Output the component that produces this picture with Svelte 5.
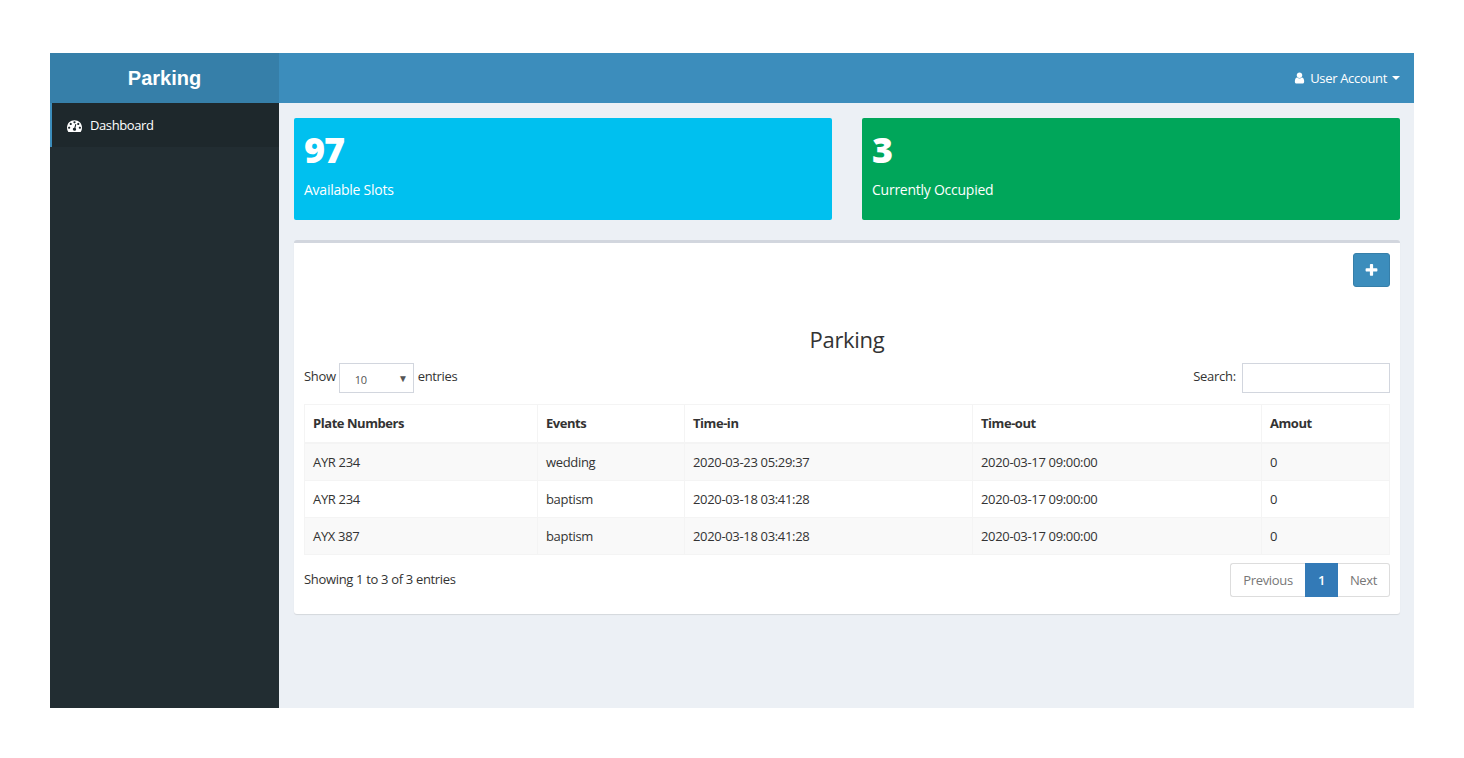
<script lang="ts">
  const rows = [
    { plate: 'AYR 234', event: 'wedding', timeIn: '2020-03-23 05:29:37', timeOut: '2020-03-17 09:00:00', amount: 0 },
    { plate: 'AYR 234', event: 'baptism', timeIn: '2020-03-18 03:41:28', timeOut: '2020-03-17 09:00:00', amount: 0 },
    { plate: 'AYX 387', event: 'baptism', timeIn: '2020-03-18 03:41:28', timeOut: '2020-03-17 09:00:00', amount: 0 }
  ];
</script>

<div class="page">
  <div class="wrapper">
    <header class="topbar">
      <div class="logo">Parking</div>
      <div class="navbar">
        <span class="account">
          <svg class="icon user" viewBox="0 0 1792 1792"><path d="M1536 1399q0 109-62.5 187t-150.5 78h-854q-88 0-150.5-78t-62.5-187q0-85 8.5-160.5t31.5-152 58.5-131 94-89 134.5-34.5q131 128 313 128t313-128q76 0 134.5 34.5t94 89 58.5 131 31.5 152 8.5 160.5zm-256-887q0 159-112.5 271.5t-271.5 112.5-271.5-112.5-112.5-271.5 112.5-271.5 271.5-112.5 271.5 112.5 112.5 271.5z"/></svg>
          User Account
          <span class="caret"></span>
        </span>
      </div>
    </header>
    <div class="body">
      <aside class="sidebar">
        <div class="nav-item">
          <svg class="icon dash" viewBox="0 0 1792 1792"><path d="M384 1152q0-53-37.5-90.5t-90.5-37.5-90.5 37.5-37.5 90.5 37.5 90.5 90.5 37.5 90.5-37.5 37.5-90.5zm192-448q0-53-37.5-90.5t-90.5-37.5-90.5 37.5-37.5 90.5 37.5 90.5 90.5 37.5 90.5-37.5 37.5-90.5zm428 481l101-382q6-26-7.5-48.5t-38.5-29.5-48 6.5-30 39.5l-101 382q-60 5-107 43.5t-63 98.5q-20 77 20 146t117 89 146-20 89-117q16-60-6-117t-72-91zm660-33q0-53-37.5-90.5t-90.5-37.5-90.5 37.5-37.5 90.5 37.5 90.5 90.5 37.5 90.5-37.5 37.5-90.5zm-640-640q0-53-37.5-90.5t-90.5-37.5-90.5 37.5-37.5 90.5 37.5 90.5 90.5 37.5 90.5-37.5 37.5-90.5zm448 192q0-53-37.5-90.5t-90.5-37.5-90.5 37.5-37.5 90.5 37.5 90.5 90.5 37.5 90.5-37.5 37.5-90.5zm320 448q0 261-141 483-19 29-54 29h-1402q-35 0-54-29-141-221-141-483 0-182 71-348t191-286 286-191 348-71 348 71 286 191 191 286 71 348z"/></svg>
          <span>Dashboard</span>
        </div>
      </aside>
      <main class="content">
        <div class="stats">
          <div class="stat aqua">
            <h3>97</h3>
            <p>Available Slots</p>
          </div>
          <div class="stat green">
            <h3>3</h3>
            <p>Currently Occupied</p>
          </div>
        </div>
        <section class="box">
          <div class="actions">
            <button class="add" aria-label="Add">
              <svg class="icon plus" viewBox="0 0 1792 1792"><path d="M1600 736v192q0 40-28 68t-68 28h-416v416q0 40-28 68t-68 28h-192q-40 0-68-28t-28-68v-416h-416q-40 0-68-28t-28-68v-192q0-40 28-68t68-28h416v-416q0-40 28-68t68-28h192q40 0 68 28t28 68v416h416q40 0 68 28t28 68z"/></svg>
            </button>
          </div>
          <h2>Parking</h2>
          <div class="controls">
            <div class="length">
              <span class="lbl">Show</span>
              <span class="select"><span>10</span><i>▼</i></span>
              <span class="lbl">entries</span>
            </div>
            <div class="search">
              <span class="lbl">Search:</span>
              <input type="search" />
            </div>
          </div>
          <table>
            <thead>
              <tr>
                <th class="c1">Plate Numbers</th>
                <th class="c2">Events</th>
                <th class="c3">Time-in</th>
                <th class="c4">Time-out</th>
                <th>Amout</th>
              </tr>
            </thead>
            <tbody>
              {#each rows as row}
                <tr>
                  <td>{row.plate}</td>
                  <td>{row.event}</td>
                  <td>{row.timeIn}</td>
                  <td>{row.timeOut}</td>
                  <td>{row.amount}</td>
                </tr>
              {/each}
            </tbody>
          </table>
          <div class="footer">
            <div class="info">Showing 1 to 3 of 3 entries</div>
            <div class="pager">
              <span class="prev">Previous</span>
              <span class="current">1</span>
              <span class="next">Next</span>
            </div>
          </div>
        </section>
      </main>
    </div>
  </div>
</div>

<style>
  :global(body) {
    background: #fff;
  }

  .page {
    padding: 53px 50px 50px;
    font-family: "Open Sans", "Noto Sans", sans-serif;
    font-size: 13px;
    letter-spacing: -0.33px;
    color: #333;
  }

  .wrapper {
    height: 655px;
    display: flex;
    flex-direction: column;
    background: #ecf0f5;
  }

  .topbar {
    display: flex;
    height: 50px;
    flex-shrink: 0;
  }

  .logo {
    width: 229px;
    background: #367fa9;
    color: #fff;
    font-family: "Liberation Sans", Arial, sans-serif;
    font-size: 20px;
    font-weight: 700;
    letter-spacing: 0;
    line-height: 50px;
    text-align: center;
  }

  .navbar {
    flex: 1;
    background: #3c8dbc;
    display: flex;
    align-items: center;
    justify-content: flex-end;
    padding-right: 14px;
  }

  .account {
    color: #fff;
    display: flex;
    align-items: center;
    gap: 4px;
  }

  .icon {
    width: 14px;
    height: 14px;
    fill: #fff;
  }

  .user {
    width: 13px;
    height: 14px;
  }

  .caret {
    width: 0;
    height: 0;
    margin-left: 1px;
    border-top: 4px solid #fff;
    border-left: 4px solid transparent;
    border-right: 4px solid transparent;
  }

  .body {
    flex: 1;
    display: flex;
    min-height: 0;
  }

  .sidebar {
    width: 229px;
    background: #222d32;
  }

  .nav-item {
    height: 44px;
    background: #1e282c;
    border-left: 2px solid #3c8dbc;
    padding-left: 15px;
    color: #fff;
    display: flex;
    align-items: center;
    gap: 8px;
    letter-spacing: -0.4px;
  }

  .dash {
    width: 15px;
    height: 15px;
  }

  .content {
    flex: 1;
    padding: 15px 14px 0 15px;
  }

  .stats {
    display: grid;
    grid-template-columns: 1fr 1fr;
    gap: 30px;
    margin-bottom: 20px;
  }

  .stat {
    height: 102px;
    box-sizing: border-box;
    padding: 10px;
    border-radius: 2px;
    color: #fff;
  }

  .aqua {
    background: #00c0ef;
  }

  .green {
    background: #00a65a;
  }

  .stat h3 {
    margin: 0 0 8px;
    font-size: 36px;
    font-weight: 800;
    line-height: 44px;
    letter-spacing: -1px;
  }

  .stat p {
    margin: 0;
    font-size: 14px;
    line-height: 20px;
    letter-spacing: -0.25px;
  }

  .box {
    background: #fff;
    border-top: 3px solid #d2d6de;
    border-radius: 3px;
    box-shadow: 0 1px 1px rgba(0, 0, 0, 0.1);
    padding: 10px;
    height: 374px;
    box-sizing: border-box;
  }

  .actions {
    display: flex;
    justify-content: flex-end;
    height: 34px;
  }

  .add {
    width: 37px;
    height: 34px;
    padding: 0;
    background: #3c8dbc;
    border: 1px solid #367fa9;
    border-radius: 3px;
    display: flex;
    align-items: center;
    justify-content: center;
  }

  .plus {
    width: 15px;
    height: 15px;
  }

  h2 {
    margin: 37px 0 0;
    font-size: 22px;
    font-weight: 400;
    line-height: 30px;
    text-align: center;
    letter-spacing: -0.3px;
  }

  .controls {
    display: flex;
    justify-content: space-between;
    align-items: center;
    height: 30px;
    margin-top: 9px;
  }

  .length,
  .search {
    display: flex;
    align-items: flex-start;
    gap: 3px;
  }

  .length .select + .lbl {
    margin-left: 1px;
  }

  .lbl {
    line-height: 27px;
  }

  .select {
    width: 75px;
    height: 30px;
    box-sizing: border-box;
    border: 1px solid #d2d6de;
    display: flex;
    align-items: center;
    justify-content: space-between;
    padding: 2px 5px 0 15px;
    font-size: 11px;
    color: #555;
  }

  .select i {
    font-style: normal;
    font-size: 10px;
    margin-top: -3px;
  }

  .search {
    gap: 6px;
    letter-spacing: -0.25px;
  }

  input {
    width: 148px;
    height: 30px;
    box-sizing: border-box;
    border: 1px solid #d2d6de;
    padding: 0 8px;
    outline: none;
  }

  table {
    width: 1086px;
    margin-top: 11px;
    table-layout: fixed;
    border-collapse: collapse;
    border: 1px solid #f4f4f4;
  }

  th,
  td {
    padding: 8px;
    border: 1px solid #f4f4f4;
    line-height: 20px;
    text-align: left;
    font-weight: 400;
  }

  th {
    font-weight: 700;
    height: 38px;
    padding-top: 0;
    padding-bottom: 0;
    border-bottom-width: 2px;
    box-sizing: border-box;
    letter-spacing: -0.45px;
  }

  .c1 {
    width: 233px;
  }

  .c2 {
    width: 147px;
  }

  .c3 {
    width: 288px;
  }

  .c4 {
    width: 289px;
  }

  td {
    height: 37px;
    box-sizing: border-box;
  }

  tbody tr:nth-child(odd) {
    background: #f9f9f9;
  }

  .footer {
    display: flex;
    justify-content: space-between;
    align-items: center;
    margin-top: 8px;
  }

  .info {
    margin-top: -2px;
  }

  .pager {
    display: flex;
    height: 34px;
    box-sizing: border-box;
    color: #777;
  }

  .pager span {
    display: flex;
    align-items: center;
    justify-content: center;
    box-sizing: border-box;
    border: 1px solid #ddd;
    background: #fff;
  }

  .pager .prev {
    width: 75px;
    border-right: 0;
    border-radius: 3px 0 0 3px;
  }

  .pager .current {
    width: 33px;
    background: #337ab7;
    border-color: #337ab7;
    color: #fff;
    font-weight: 600;
  }

  .pager .next {
    width: 52px;
    border-left: 0;
    border-radius: 0 3px 3px 0;
  }
</style>
